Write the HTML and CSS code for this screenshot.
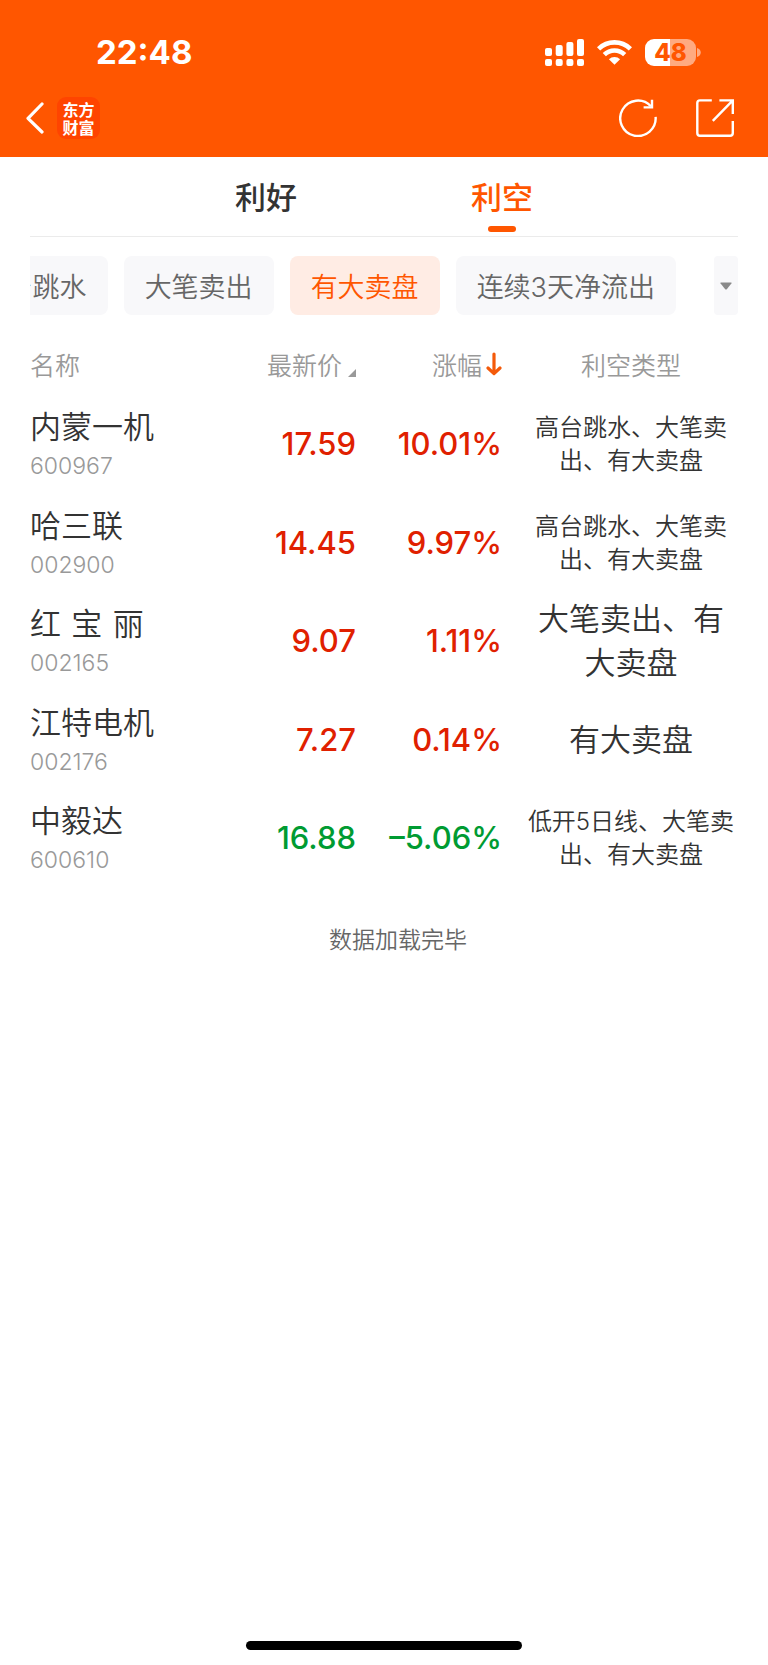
FILE: index.html
```html
<!DOCTYPE html>
<html lang="zh-CN">
<head>
<meta charset="utf-8">
<meta name="viewport" content="width=device-width, initial-scale=1">
<title>利空</title>
<link rel="stylesheet" href="styles.css">
</head>
<body>
<header class="header">
  <div class="status">
    <span class="status-time">22:48</span>
    <div class="status-icons">
      <svg class="signal" width="39" height="27" viewBox="0 0 39 27" fill="#fff" aria-hidden="true">
        <rect x="0" y="9" width="7" height="8" rx="2"/><rect x="10.7" y="6" width="7" height="11" rx="2"/><rect x="21.4" y="3" width="7" height="14" rx="2"/><rect x="32" y="0" width="7" height="17" rx="2"/>
        <rect x="0" y="20" width="7" height="7" rx="2"/><rect x="10.7" y="20" width="7" height="7" rx="2"/><rect x="21.4" y="20" width="7" height="7" rx="2"/><rect x="32" y="20" width="7" height="7" rx="2"/>
      </svg>
      <svg class="wifi" width="35" height="26" viewBox="0 0 35 26" fill="none" stroke="#fff" stroke-width="4.6" aria-hidden="true">
        <path d="M1.6 9.8a22.8 22.8 0 0 1 31.8 0"/><path d="M7.3 15.6a14.6 14.6 0 0 1 20.4 0"/>
        <path d="M11.9 20.2a8 8 0 0 1 11.2 0L17.5 25.8z" fill="#fff" stroke="none"/>
      </svg>
      <span class="battery"><span class="battery-body">48</span><svg width="4" height="9" viewBox="0 0 4 9" aria-hidden="true"><path d="M0 0C5 1 5 8 0 9z" fill="#ffaa80"/></svg></span>
    </div>
  </div>
  <nav class="nav">
    <button class="icon-button" type="button" aria-label="返回">
      <svg width="18" height="32" viewBox="0 0 18 32" fill="none" stroke="#fff" stroke-width="3.2" stroke-linecap="round" stroke-linejoin="round"><path d="M16 2 2 16.3 16 30"/></svg>
    </button>
    <span class="logo"><span>东方</span><span>财富</span></span>
    <div class="nav-actions">
      <button class="icon-button" type="button" aria-label="刷新">
        <svg width="38" height="38" viewBox="0 0 38 38" fill="none" stroke="#fff" stroke-width="2.4"><path d="M36.6 17.8A17.7 17.7 0 1 1 31.9 7.2"/><path d="M33 0.8V8.4H24.6"/></svg>
      </button>
      <button class="icon-button" type="button" aria-label="分享">
        <svg width="38" height="38" viewBox="0 0 38 38" fill="none" stroke="#fff" stroke-width="2.4"><path d="M15.8 1.4H4Q1.3 1.4 1.3 4V34Q1.3 36.8 4 36.8H34Q36.8 36.8 36.8 34V22"/><path d="M23.4 1.4H36.8V15M36.8 1.4 16.8 21.8"/></svg>
      </button>
    </div>
  </nav>
</header>
<main class="main">
  <div class="tabs" role="tablist">
    <button class="tab" type="button" role="tab" aria-selected="false">利好</button>
    <button class="tab tab-active" type="button" role="tab" aria-selected="true">利空</button>
  </div>
  <div class="filters">
    <div class="chips">
      <button class="chip" type="button">高台跳水</button>
      <button class="chip" type="button">大笔卖出</button>
      <button class="chip chip-active" type="button">有大卖盘</button>
      <button class="chip" type="button">连续3天净流出</button>
    </div>
    <button class="more" type="button" aria-label="更多">
      <svg width="12" height="8" viewBox="0 0 12 8"><path d="M1 .5H11Q12 .7 11.4 1.6L6.8 7.2Q6 8 5.2 7.2L.6 1.6Q0 .7 1 .5z" fill="#8a8a8a"/></svg>
    </button>
  </div>
  <table class="stocks">
    <colgroup><col><col class="col-price"><col class="col-change"><col class="col-type"></colgroup>
    <thead>
      <tr>
        <th class="name" scope="col">名称</th>
        <th class="num" scope="col"><button class="sort" type="button">最新价<svg class="sort-corner" width="8" height="8" viewBox="0 0 8 8"><path d="M8 0V8H0z" fill="#999"/></svg></button></th>
        <th class="num" scope="col"><button class="sort" type="button">涨幅<svg class="sort-arrow" width="16" height="24" viewBox="0 0 16 24" fill="none" stroke="#f45a0a" stroke-width="3.2" stroke-linecap="round" stroke-linejoin="round"><path d="M8 2V21M2 16 8 21.6 14 16"/></svg></button></th>
        <th class="type" scope="col">利空类型</th>
      </tr>
    </thead>
    <tbody>
      <tr><td class="name">内蒙一机<span class="code">600967</span></td><td class="num up">17.59</td><td class="num up">10.01%</td><td class="type type-small">高台跳水、大笔卖出、有大卖盘</td></tr>
      <tr><td class="name">哈三联<span class="code">002900</span></td><td class="num up">14.45</td><td class="num up">9.97%</td><td class="type type-small">高台跳水、大笔卖出、有大卖盘</td></tr>
      <tr><td class="name">红&emsp13;宝&emsp13;丽<span class="code">002165</span></td><td class="num up">9.07</td><td class="num up">1.11%</td><td class="type">大笔卖出、有大卖盘</td></tr>
      <tr><td class="name">江特电机<span class="code">002176</span></td><td class="num up">7.27</td><td class="num up">0.14%</td><td class="type">有大卖盘</td></tr>
      <tr><td class="name">中毅达<span class="code">600610</span></td><td class="num down">16.88</td><td class="num down">–5.06%</td><td class="type type-small">低开5日线、大笔卖出、有大卖盘</td></tr>
    </tbody>
  </table>
  <p class="end">数据加载完毕</p>
</main>
<div class="home-bar"></div>
</body>
</html>
```

FILE: styles.css
```css
* { box-sizing: border-box; }
body {
  margin: 0;
  min-height: 100vh;
  display: flex;
  flex-direction: column;
  background: #fff;
  color: #333;
  font-family: Inter, "Noto Sans CJK SC", sans-serif;
  font-weight: 350;
}
button {
  margin: 0;
  padding: 0;
  border: 0;
  background: none;
  color: inherit;
  font: inherit;
}
svg { display: block; flex: none; }

.header { background: #ff5600; color: #fff; padding-bottom: 18px; }
.status {
  display: flex;
  align-items: center;
  justify-content: space-between;
  padding: 32px 67px 25px 96px;
}
.status-time { font-size: 33px; line-height: 40px; font-weight: 700; }
.status-icons { display: flex; align-items: center; gap: 13px; }
.battery { display: flex; align-items: center; gap: 1px; }
.battery-body {
  width: 51px;
  height: 27px;
  border-radius: 9px;
  background: linear-gradient(90deg, #fff 49%, #ffaa80 49%);
  color: #ff5600;
  font-size: 24px;
  line-height: 27px;
  font-weight: 800;
  text-align: center;
}
.nav { display: flex; align-items: center; padding: 0 34px 0 26px; }
.logo {
  display: flex;
  flex-direction: column;
  align-items: center;
  justify-content: center;
  width: 43px;
  height: 42px;
  margin-left: 13px;
  border-radius: 9px;
  background: #ff4400;
  font-family: "Noto Sans CJK SC", sans-serif;
  font-size: 16px;
  line-height: 18px;
  font-weight: 700;
}
.nav-actions { display: flex; gap: 39px; margin-left: auto; }

.main { padding: 0 30px; }
.tabs {
  display: grid;
  grid-template-columns: 1fr 1fr;
  padding: 0 calc(100% / 6);
  border-bottom: 1px solid #ebebeb;
}
.tab {
  position: relative;
  height: 79px;
  padding-bottom: 2px;
  font-size: 31px;
  font-weight: 500;
}
.tab-active { color: #ff5600; }
.tab-active::after {
  content: "";
  position: absolute;
  left: 50%;
  bottom: 4px;
  width: 28px;
  height: 6px;
  margin-left: -14px;
  border-radius: 3px;
  background: #ff5600;
}

.filters { display: flex; gap: 38px; margin-top: 19px; }
.chips {
  flex: 1;
  min-width: 0;
  display: flex;
  justify-content: flex-end;
  gap: 16px;
  overflow: hidden;
}
.chip {
  flex: none;
  height: 59px;
  padding: 0 21px;
  border-radius: 8px;
  background: #f8f8fa;
  color: #666;
  font-size: 27px;
}
.chip-active { background: #ffece4; color: #ff5600; }
.more {
  display: flex;
  align-items: center;
  justify-content: center;
  width: 24px;
  border-radius: 4px;
  background: #f8f8fa;
}

.stocks {
  width: 100%;
  margin-top: 18px;
  table-layout: fixed;
  border-collapse: collapse;
  font-size: 31px;
}
.col-price { width: 140px; }
.col-change { width: 146px; }
.col-type { width: 236px; }
.stocks th, .stocks td { padding: 0; }
.stocks th {
  height: 62px;
  padding-bottom: 1px;
  color: #999;
  font-size: 25px;
  font-weight: 350;
}
.stocks td { height: 98px; line-height: 44px; }
.stocks tr:nth-child(even) td { height: 99px; }
.stocks .name { text-align: left; }
.stocks .num { text-align: right; }
.stocks td.num { font-weight: 500; }
.stocks .type { padding-left: 22px; text-align: center; }
.stocks .type-small { font-size: 24px; line-height: 33px; }
.code {
  display: block;
  color: #999;
  font-size: 23px;
  line-height: 34px;
}
.up { color: #e02000; }
.down { color: #009b32; }
.sort { display: inline-flex; align-items: center; }
.sort-corner { align-self: flex-end; margin: 0 0 5px 6px; }
.sort-arrow { margin-left: 4px; }
.end {
  margin: 0;
  padding: 35px 0 36px 28px;
  color: #666;
  font-size: 23px;
  line-height: 36px;
  text-align: center;
}
.home-bar {
  width: 36%;
  height: 9px;
  margin: auto auto 15px;
  border-radius: 5px;
  background: #000;
}
```
